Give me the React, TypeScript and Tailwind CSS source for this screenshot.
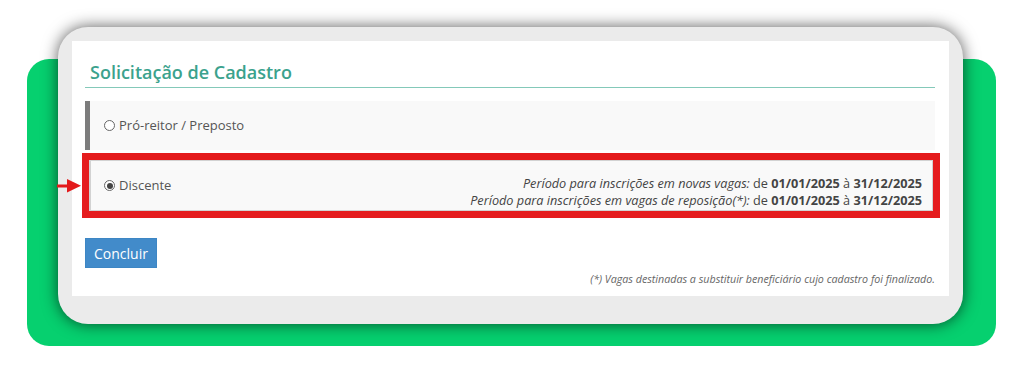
import React from "react";

function Radio({checked}: {checked?: boolean}) {
  return (
    <span className="flex h-[11px] w-[11px] shrink-0 items-center justify-center rounded-full border border-[#666] bg-white">
      {checked && <span className="h-[6px] w-[6px] rounded-full bg-[#444]" />}
    </span>
  );
}

// red pointer sitting just left of the highlighted option
function Arrow() {
  return (
    <svg
      className="absolute left-[-32px] top-[19px]"
      width="25"
      height="14"
      viewBox="0 0 25 14"
    >
      <rect x="0" y="5.5" width="12" height="3" fill="#e3191b" />
      <polygon points="10,0 24,6.8 10,13.5" fill="#e3191b" />
    </svg>
  );
}

export default function App() {
  return (
    <div className="h-[378px] w-[1024px] bg-white pl-[27px] pt-[59px] font-['Open_Sans',sans-serif]">
      <div className="h-[287px] w-[969px] rounded-[22px] bg-[#06d06f]">
        <div className="-mt-[32px] ml-[31px] inline-block h-[297px] w-[905px] rounded-[30px] bg-[#ebebeb] px-[14px] pt-[14px] shadow-[0_0_16px_rgba(0,0,0,0.65)]">
          <div className="flex h-[255px] flex-col bg-white pl-[13px] pr-[14px] pt-[19px]">
            <div className="border-b border-[#84c9b9] pb-[3px] pl-[5px]">
              <h1 className="text-[18px] font-semibold leading-[24px] text-[#3ba28d]">
                Solicitação de Cadastro
              </h1>
            </div>

            <div className="mt-[13px] flex h-[49px] items-center gap-[4px] border-l-[5px] border-[#7c7c7c] bg-[#f9f9f9] pl-[14px]">
              <Radio />
              <span className="text-[13px] text-[#555]">Pró-reitor / Preposto</span>
            </div>

            <div className="relative -ml-[3px] -mr-[5px] mt-[3px] border-[7px] border-[#e51c1e]">
              <Arrow />
              <div className="flex h-[51px] items-center justify-between border border-l-2 border-[#d2d2d2] bg-[#f9f9f9] pl-[13px] pr-[10px]">
                <div className="flex items-center gap-[4px]">
                  <Radio checked />
                  <span className="text-[13px] text-[#555]">Discente</span>
                </div>
                <div className="pt-[13px] text-right text-[12.7px] leading-[17px] text-[#444]">
                  <div>
                    <i>Período para inscrições em novas vagas:</i> de <b>01/01/2025</b> à <b>31/12/2025</b>
                  </div>
                  <div>
                    <i>Período para inscrições em vagas de reposição(*):</i> de <b>01/01/2025</b> à{" "}
                    <b>31/12/2025</b>
                  </div>
                </div>
              </div>
            </div>

            <div className="mt-[20px]">
              <button className="h-[30px] w-[72px] border border-[#3d86c4] bg-[#428bca] text-[14px] text-white">
                Concluir
              </button>
            </div>

            <p className="mt-[4px] text-right text-[10.7px] italic leading-[15px] text-[#666]">
              (*) Vagas destinadas a substituir beneficiário cujo cadastro foi finalizado.
            </p>
          </div>
        </div>
      </div>
    </div>
  );
}
